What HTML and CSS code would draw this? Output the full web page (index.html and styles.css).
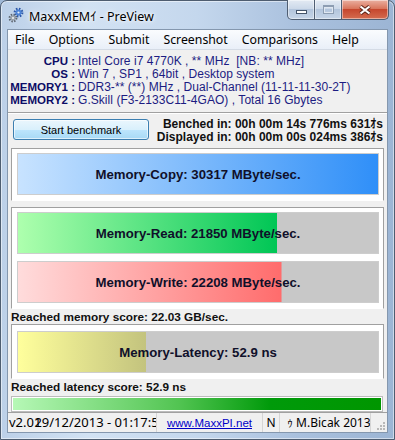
FILE: index.html
```html
<!DOCTYPE html>
<html lang="en">
<head>
    <meta charset="UTF-8">
    <meta name="viewport" content="width=device-width, initial-scale=1.0">
    <title>MaxxMEM - PreView</title>
    <link rel="stylesheet" href="styles.css">
</head>
<body>
    <div class="window">
        <div class="titlebar">
            <svg class="app-icon" width="16" height="16" viewBox="0 0 16 16">
                <circle cx="10.5" cy="5.5" r="3.7" fill="none" stroke="#2b57a8" stroke-width="2.4" stroke-dasharray="1.5 1.4"/>
                <circle cx="10.5" cy="5.5" r="3" fill="#4a82d6"/>
                <circle cx="10.5" cy="5.5" r="1.1" fill="#e4edf9"/>
                <circle cx="5" cy="11" r="3.3" fill="none" stroke="#5d6670" stroke-width="2.2" stroke-dasharray="1.4 1.2"/>
                <circle cx="5" cy="11" r="2.6" fill="#9aa3ad"/>
                <circle cx="5" cy="11" r="1" fill="#f2f4f6"/>
            </svg>
            <span class="title">MaxxMEMｲ - PreView</span>
            <div class="caption">
                <div class="cbtn min"><span class="min-glyph"></span></div>
                <div class="cbtn max"><span class="max-glyph"></span></div>
                <div class="cbtn close">
                    <svg width="14" height="10" viewBox="0 0 14 10">
                        <path d="M2.5 1.5 L11.5 8.5 M11.5 1.5 L2.5 8.5" stroke="#5a2418" stroke-width="4" fill="none"/>
                        <path d="M2.5 1.5 L11.5 8.5 M11.5 1.5 L2.5 8.5" stroke="#fff" stroke-width="2.2" fill="none"/>
                    </svg>
                </div>
            </div>
        </div>

        <div class="client">
            <ul class="menu">
                <li>File</li>
                <li>Options</li>
                <li>Submit</li>
                <li>Screenshot</li>
                <li>Comparisons</li>
                <li>Help</li>
            </ul>

            <div class="info">
                <div class="info-row"><b>CPU :</b><span>Intel Core i7 4770K , ** MHz&nbsp; [NB: ** MHz]</span></div>
                <div class="info-row"><b>OS :</b><span>Win 7 , SP1 , 64bit , Desktop system</span></div>
                <div class="info-row"><b>MEMORY1 :</b><span>DDR3-** (**) MHz , Dual-Channel (11-11-11-30-2T)</span></div>
                <div class="info-row"><b>MEMORY2 :</b><span>G.Skill (F3-2133C11-4GAO) , Total 16 Gbytes</span></div>
            </div>

            <div class="actions">
                <button class="start-btn">Start benchmark</button>
                <div class="timing">
                    <div>Benched in: 00h 00m 14s 776ms 631ｵs</div>
                    <div>Displayed in: 00h 00m 00s 024ms 386ｵs</div>
                </div>
            </div>

            <div class="panel">
                <div class="bar copy" style="--fill: 100%">Memory-Copy: 30317 MByte/sec.</div>
            </div>

            <div class="panel panel-two">
                <div class="bar read" style="--fill: 72%">Memory-Read: 21850 MByte/sec.</div>
                <div class="bar write" style="--fill: 73.2%">Memory-Write: 22208 MByte/sec.</div>
            </div>

            <div class="score">Reached memory score: 22.03 GB/sec.</div>

            <div class="panel panel-three">
                <div class="bar latency" style="--fill: 35.6%">Memory-Latency: 52.9 ns</div>
            </div>

            <div class="score">Reached latency score: 52.9 ns</div>

            <div class="progress"><div class="progress-fill"></div></div>

            <div class="statusbar">
                <div class="cell cell-date"><span>v2.01</span><span class="date">29/12/2013 - 01:17:55</span></div>
                <div class="cell cell-link"><a href="#">www.MaxxPI.net</a></div>
                <div class="cell cell-n">N</div>
                <div class="cell cell-copy">ｩ M.Bicak 2013</div>
                <div class="grip">
                    <svg width="12" height="12" viewBox="0 0 12 12">
                        <g fill="#b8b8b8">
                            <rect x="9" y="3" width="2" height="2"/>
                            <rect x="6" y="6" width="2" height="2"/>
                            <rect x="9" y="6" width="2" height="2"/>
                            <rect x="3" y="9" width="2" height="2"/>
                            <rect x="6" y="9" width="2" height="2"/>
                            <rect x="9" y="9" width="2" height="2"/>
                        </g>
                    </svg>
                </div>
            </div>
        </div>
    </div>
</body>
</html>
```

FILE: styles.css
```css
* {
    box-sizing: border-box;
}
body {
    margin: 0;
    font-family: "Liberation Sans", "Noto Sans CJK JP", sans-serif;
    background-color: #9fb8d6;
}
.window {
    width: 395px;
    height: 440px;
    display: flex;
    flex-direction: column;
    padding: 0 6px 6px;
    border: 1px solid #4e5d70;
    border-radius: 7px 7px 0 0;
    background: linear-gradient(to right, #bcd0e8 0%, #d2e2f3 22%, #c4d7ed 50%, #aac1de 75%, #9cb5d4 100%);
    box-shadow: inset 0 0 0 1px rgba(255,255,255,0.5);
}

/* title bar */
.titlebar {
    height: 28px;
    display: flex;
    align-items: center;
    padding-left: 1px;
}
.app-icon {
    flex: none;
}
.title {
    margin-left: 5px;
    font-family: "Noto Sans", "Noto Sans CJK JP", sans-serif;
    font-size: 12.5px;
    color: #000;
    text-shadow: 0 0 6px #fff, 0 0 3px #fff;
}
.caption {
    display: flex;
    margin-left: auto;
    margin-right: -1px;
    margin-top: -1px;
    align-self: flex-start;
}
.cbtn {
    height: 20px;
    display: flex;
    align-items: center;
    justify-content: center;
    border: 1px solid #4f5e72;
    border-top: none;
    box-shadow: inset 0 0 0 1px rgba(255,255,255,0.45);
}
.min {
    width: 28px;
    border-radius: 0 0 0 5px;
    background: linear-gradient(#e3eaf3 0%, #ccd9e9 45%, #b3c5dc 50%, #c6d5e8 100%);
}
.max {
    width: 27px;
    border-left: none;
    background: linear-gradient(#e3eaf3 0%, #ccd9e9 45%, #b3c5dc 50%, #c6d5e8 100%);
}
.close {
    width: 47px;
    border-left: none;
    border-radius: 0 0 5px 0;
    background: linear-gradient(#eab0a1 0%, #d9765d 45%, #c6472e 50%, #d46c4f 100%);
}
.min-glyph {
    width: 11px;
    height: 4px;
    margin-top: 5px;
    background: #fff;
    border: 1px solid #44546a;
}
.max-glyph {
    width: 11px;
    height: 9px;
    border: 1px solid #8d9db2;
    border-top-width: 2px;
    box-shadow: inset 0 0 0 1px #dfe7f1;
}

/* client area */
.client {
    flex: 1;
    display: flex;
    flex-direction: column;
    border: 1px solid #8497ae;
    background-color: #f0f0f0;
}
.menu {
    list-style: none;
    margin: 0;
    padding: 0;
    display: flex;
    height: 20px;
    border-bottom: 1px solid #d4dbe5;
    background: linear-gradient(#fafcfe, #e9eff8);
    font-family: "Noto Sans", sans-serif;
    font-size: 12.3px;
}
.menu li {
    padding: 0 7px;
    line-height: 19px;
}
.info {
    padding: 5px 0;
    border-bottom: 1px solid #a0a0a0;
}
.info-row {
    display: flex;
    align-items: baseline;
    line-height: 13px;
}
.info-row b {
    width: 67px;
    flex: none;
    text-align: right;
    font-size: 11.5px;
    color: #0c0c66;
}
.info-row span {
    margin-left: 3px;
    font-size: 12px;
    letter-spacing: 0.05px;
    color: #1c1c82;
    white-space: nowrap;
}
.actions {
    display: flex;
    justify-content: space-between;
    padding: 4px 4px 0 5px;
    border-top: 1px solid #fff;
}
.start-btn {
    width: 136px;
    height: 21px;
    margin-top: 1px;
    padding: 0;
    border: 1px solid #3c7fb1;
    border-radius: 3px;
    background: linear-gradient(#eaf6fd 0%, #d9f0fc 50%, #bee6fd 50%, #a7d9f5 100%);
    box-shadow: inset 0 0 0 1px rgba(255,255,255,0.6);
    font-family: "Liberation Sans", sans-serif;
    font-size: 11px;
    color: #000;
}
.timing {
    text-align: right;
    font-size: 12px;
    font-weight: bold;
    line-height: 13px;
    color: #111;
}
.panel {
    margin: 4px 3px 0;
    padding: 4px 4px 5px 5px;
    border: 1px solid #a0a0a0;
    border-bottom-color: #fff;
    background-color: #fff;
}
.panel-two {
    margin-top: 6px;
    display: flex;
    flex-direction: column;
    gap: 7px;
}
.panel-three {
    margin-top: 0;
    padding-top: 6px;
}
.bar {
    height: 42px;
    display: flex;
    align-items: center;
    justify-content: center;
    border: 1px solid #cdcdcd;
    background-color: #c8c8c8;
    background-repeat: no-repeat;
    background-size: var(--fill) 100%;
    font-size: 13.2px;
    font-weight: bold;
    color: #10102a;
}
.copy {
    background-image: linear-gradient(to right, #c8e3ff, #2f8ff8);
}
.read {
    background-image: linear-gradient(to right, #aeffae, #00c655);
}
.write {
    background-image: linear-gradient(to right, #ffdcdc, #ff6c6c);
}
.latency {
    background-image: linear-gradient(to right, #ffff9c, #c3c37e);
}
.score {
    margin-top: 2px;
    padding-left: 3px;
    font-size: 11.8px;
    font-weight: bold;
    line-height: 13px;
    color: #111;
}
.score + .panel {
    margin-top: 0;
}
.progress {
    height: 16px;
    margin: 2px 4px 0 3px;
    padding: 1px;
    border: 1px solid #bcbcbc;
    background-color: #fff;
}
.progress-fill {
    height: 100%;
    background: linear-gradient(to right, #b6f8b6 0%, #52c452 45%, #009a0a 70%, #009600 100%);
}

/* status bar */
.statusbar {
    margin-top: auto;
    height: 20px;
    display: flex;
    border-top: 1px solid #a0a0a0;
    font-family: "Noto Sans", "Noto Sans CJK JP", sans-serif;
    font-size: 12px;
    line-height: 19px;
    color: #000;
}
.cell {
    overflow: hidden;
    white-space: nowrap;
    border-right: 1px solid #d5d5d5;
}
.cell-date {
    width: 149px;
    padding-left: 1px;
    font-size: 13px;
}
.date {
    margin-left: -7px;
}
.cell-link {
    width: 106px;
    text-align: center;
}
.cell-link a {
    font-family: "Liberation Sans", sans-serif;
    font-size: 11.5px;
    color: #0000c8;
}
.cell-n {
    width: 17px;
    text-align: center;
}
.cell-copy {
    width: 91px;
    padding-left: 7px;
}
.grip {
    flex: 1;
    display: flex;
    align-items: flex-end;
    justify-content: flex-end;
    padding: 0 1px 1px 0;
}
```
